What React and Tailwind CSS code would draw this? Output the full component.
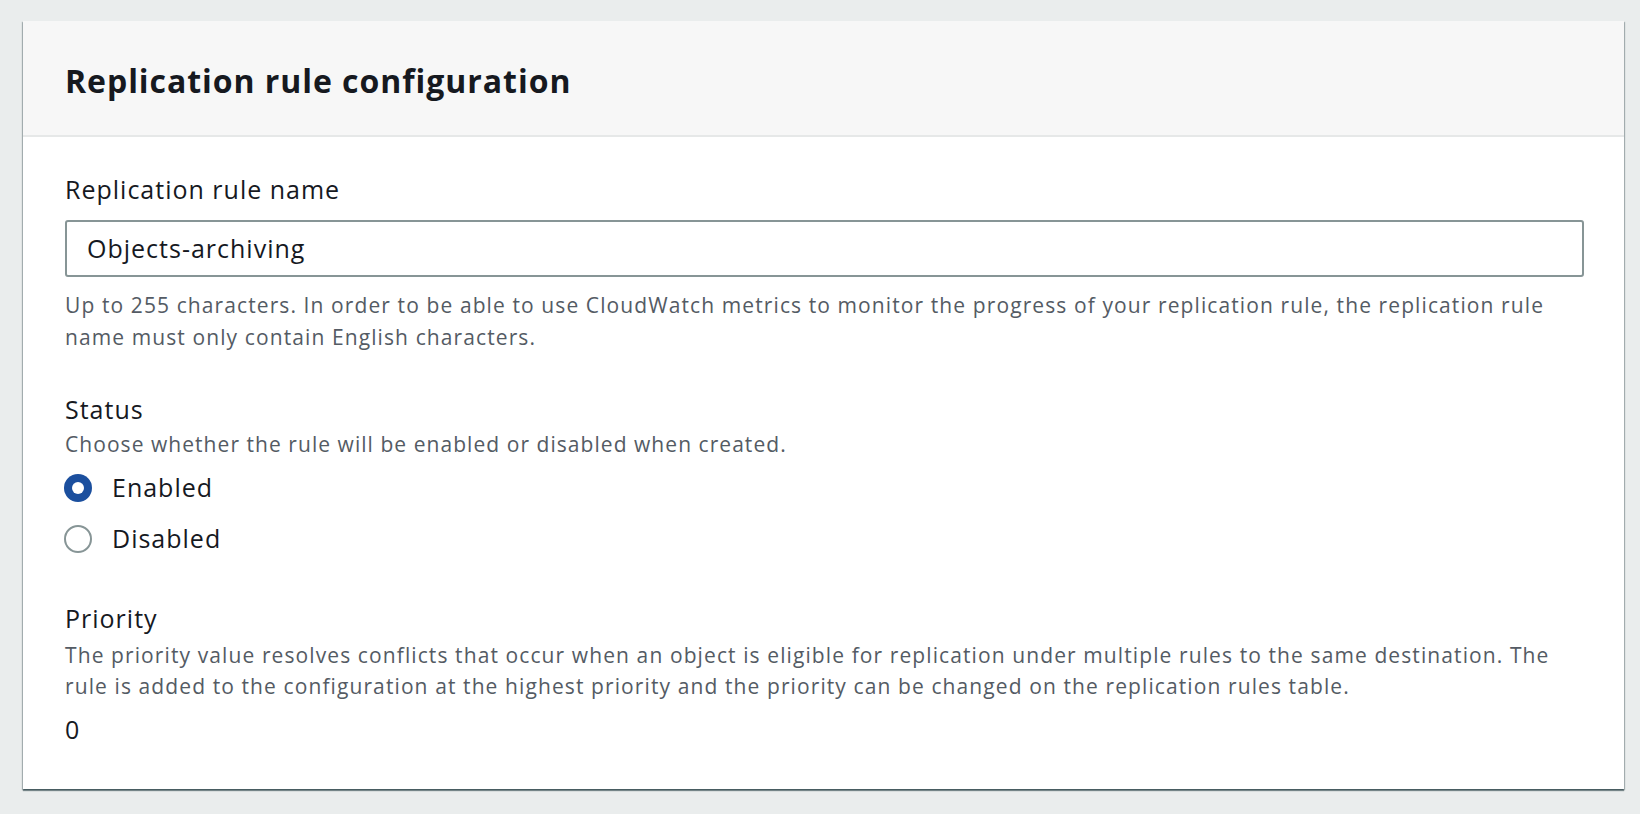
import React from "react";

export default function App() {
  const font = { fontFamily: '"Open Sans", "Noto Sans", Arial, sans-serif' };
  return (
    <div className="min-h-[814px] w-full bg-[#eaeded] pt-[21px] pl-[23px] pr-[16px] pb-[25px]" style={font}>
      <div className="bg-white shadow-[0_2px_1px_0_rgba(0,28,36,0.45),1px_1px_1px_0_rgba(0,28,36,0.25),-1px_1px_1px_0_rgba(0,28,36,0.25)]">
        <div className="h-[116px] bg-[#f7f7f7] border-b-2 border-[#e6e8e8] flex items-center pl-[42px] pt-[5px]">
          <h2 className="text-[32px] tracking-[0.95px] font-bold text-[#16191f] leading-none">Replication rule configuration</h2>
        </div>
        <div className="pl-[42px] pr-[40px] pt-[36px] pb-[44px] text-[#16191f]">
          <div className="text-[25px] tracking-[1px] leading-[32px]">Replication rule name</div>
          <div className="mt-[15px] h-[57px] border-2 border-[#879596] rounded-[3px] flex items-center pl-[20px] text-[25px] tracking-[1px]">
            Objects-archiving
          </div>
          <div className="mt-[12px] text-[21px] tracking-[1.1px] leading-[32px] text-[#545b64]">
            Up to 255 characters. In order to be able to use CloudWatch metrics to monitor the progress of your replication rule, the replication rule
            <br />
            name must only contain English characters.
          </div>

          <div className="mt-[40px] text-[25px] tracking-[1px] leading-[32px]">Status</div>
          <div className="mt-[3px] text-[21px] tracking-[1.05px] leading-[32px] text-[#545b64]">
            Choose whether the rule will be enabled or disabled when created.
          </div>
          <div className="mt-[10px] flex flex-col gap-[15px]">
            <div className="h-[36px] flex items-center">
              <span className="w-[28px] h-[28px] rounded-full bg-[#1b4f9e] flex items-center justify-center -ml-[1px]">
                <span className="w-[12px] h-[12px] rounded-full bg-white" />
              </span>
              <span className="ml-[20px] text-[25px] tracking-[1px]">Enabled</span>
            </div>
            <div className="h-[36px] flex items-center">
              <span className="w-[28px] h-[28px] rounded-full border-2 border-[#879596] -ml-[1px]" />
              <span className="ml-[20px] text-[25px] tracking-[1px]">Disabled</span>
            </div>
          </div>

          <div className="mt-[45px] text-[25px] tracking-[1px] leading-[32px]">Priority</div>
          <div className="mt-[6px] text-[21px] tracking-[1.1px] leading-[31px] text-[#545b64]">
            The priority value resolves conflicts that occur when an object is eligible for replication under multiple rules to the same destination. The
            <br />
            rule is added to the configuration at the highest priority and the priority can be changed on the replication rules table.
          </div>
          <div className="mt-[11px] text-[25px] leading-[32px]">0</div>
        </div>
      </div>
    </div>
  );
}
